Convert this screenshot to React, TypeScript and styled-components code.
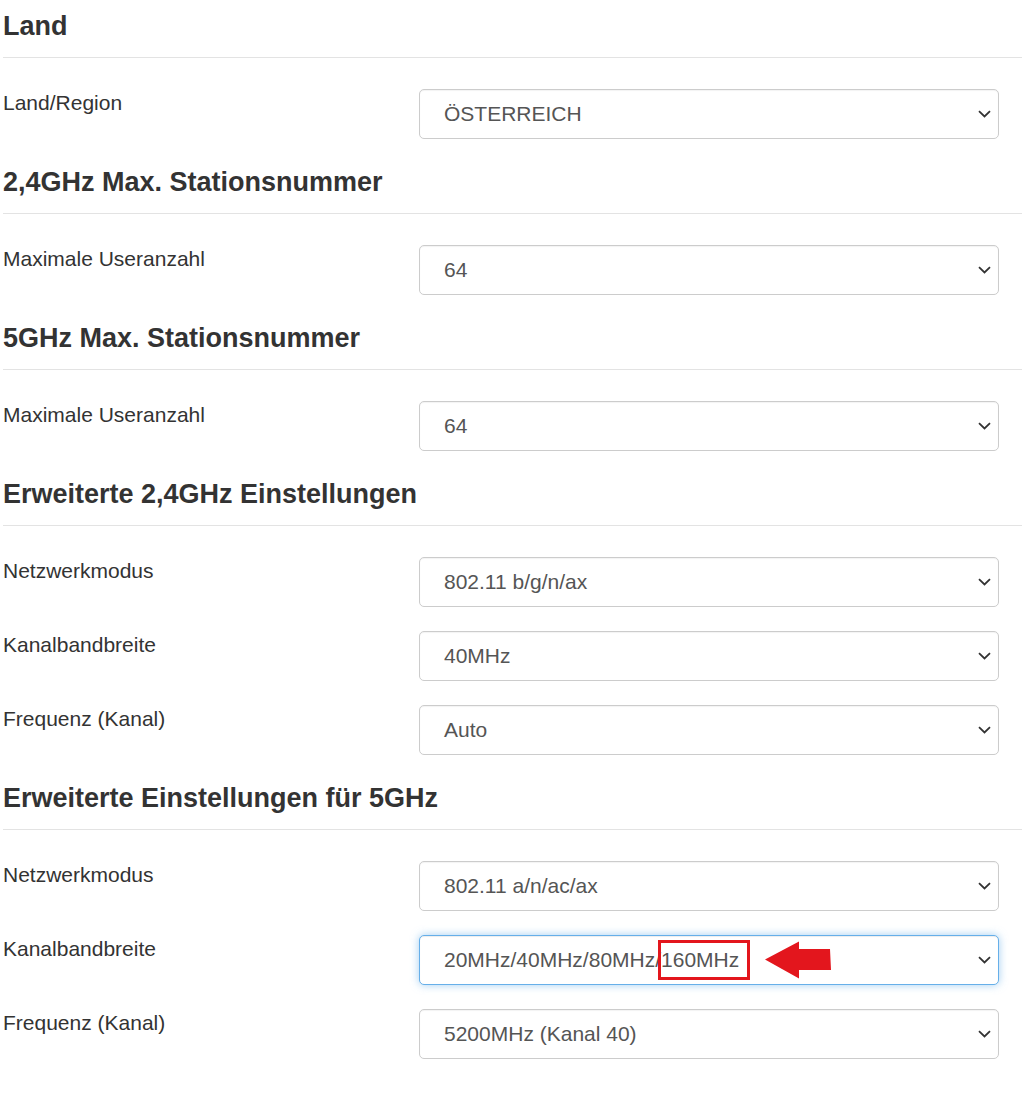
import styled, { createGlobalStyle } from 'styled-components';

const GlobalStyle = createGlobalStyle`
  html, body {
    margin: 0;
    padding: 0;
    background: #fff;
  }
  body {
    font-family: 'Liberation Sans', Arial, sans-serif;
    color: #333;
  }
`;

const Page = styled.div`
  width: 1022px;
  box-sizing: border-box;
  padding: 12px 0 60px 3px;
`;

const Section = styled.section`
  & + & {
    margin-top: 29px;
  }
`;

const Heading = styled.h3`
  margin: 0;
  padding-bottom: 16px;
  border-bottom: 1px solid #e3e3e3;
  font-size: 27px;
  line-height: 29px;
  font-weight: 700;
  color: #333;
`;

const Rows = styled.div`
  display: flex;
  flex-direction: column;
  gap: 24px;
  margin-top: 31px;
`;

const Row = styled.div`
  display: grid;
  grid-template-columns: 416px 580px;
`;

const Label = styled.label`
  font-size: 21px;
  line-height: 28px;
  color: #333;
`;

const SelectBox = styled.div<{ $focused?: boolean }>`
  height: 50px;
  box-sizing: border-box;
  display: flex;
  align-items: center;
  justify-content: space-between;
  padding: 0 7px 0 24px;
  border: 1px solid ${(props) => (props.$focused ? '#66afe9' : '#ccc')};
  border-radius: 5px;
  background: #fff;
  box-shadow: ${(props) =>
    props.$focused
      ? 'inset 0 1px 1px rgba(0,0,0,.075), 0 0 8px rgba(102,175,233,.6)'
      : 'inset 0 1px 1px rgba(0,0,0,.05)'};
  font-size: 21px;
  color: #555;
  white-space: nowrap;
`;

const Value = styled.span`
  display: flex;
  align-items: center;
`;

const Marked = styled.span`
  display: inline-block;
  margin-left: -3px;
  padding: 5px 8px 5px 0;
  border: 3px solid #e3161d;
  line-height: 24px;
`;

const Arrow = styled.svg`
  margin-left: 15px;
  display: block;
`;

const Chevron = () => (
  <svg width='13' height='8' viewBox='0 0 13 8'>
    <path d='M1 1.2 L6.5 6.5 L12 1.2' fill='none' stroke='#333' strokeWidth='1.8' />
  </svg>
);

interface FieldItem {
  label: string;
  value: string;
  marked?: boolean;
}

const sections: { title: string; fields: FieldItem[] }[] = [
  { title: 'Land', fields: [{ label: 'Land/Region', value: 'ÖSTERREICH' }] },
  { title: '2,4GHz Max. Stationsnummer', fields: [{ label: 'Maximale Useranzahl', value: '64' }] },
  { title: '5GHz Max. Stationsnummer', fields: [{ label: 'Maximale Useranzahl', value: '64' }] },
  {
    title: 'Erweiterte 2,4GHz Einstellungen',
    fields: [
      { label: 'Netzwerkmodus', value: '802.11 b/g/n/ax' },
      { label: 'Kanalbandbreite', value: '40MHz' },
      { label: 'Frequenz (Kanal)', value: 'Auto' },
    ],
  },
  {
    title: 'Erweiterte Einstellungen für 5GHz',
    fields: [
      { label: 'Netzwerkmodus', value: '802.11 a/n/ac/ax' },
      { label: 'Kanalbandbreite', value: '20MHz/40MHz/80MHz/160MHz', marked: true },
      { label: 'Frequenz (Kanal)', value: '5200MHz (Kanal 40)' },
    ],
  },
];

function App() {
  return (
    <Page>
      <GlobalStyle />
      {sections.map((section, index) => (
        <Section key={index}>
          <Heading>{section.title}</Heading>
          <Rows>
            {section.fields.map((field, field_index) => (
              <Row key={field_index}>
                <Label>{field.label}</Label>
                <SelectBox $focused={field.marked}>
                  {field.marked ? (
                    <Value>
                      20MHz/40MHz/80MHz/
                      <Marked>160MHz</Marked>
                      <Arrow width='66' height='38' viewBox='0 0 66 38'>
                        <path d='M0 18.5 L34 0.5 L34 8 L65 8 L66 29 L34 29 L34 37.5 Z' fill='#e3161d' />
                      </Arrow>
                    </Value>
                  ) : (
                    <Value>{field.value}</Value>
                  )}
                  <Chevron />
                </SelectBox>
              </Row>
            ))}
          </Rows>
        </Section>
      ))}
    </Page>
  );
}

export default App;
